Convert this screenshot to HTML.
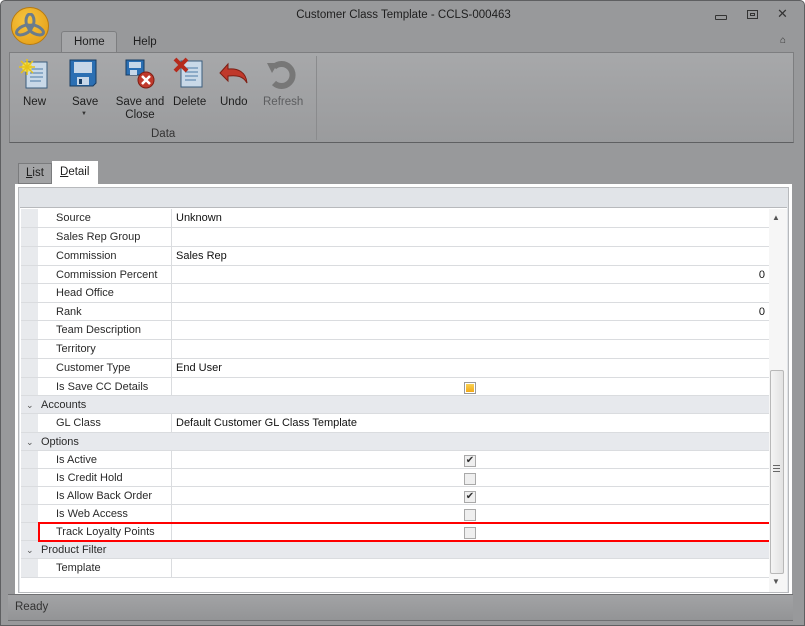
<!DOCTYPE html>
<html><head><meta charset="utf-8">
<style>
*{margin:0;padding:0;box-sizing:border-box}
body{width:805px;height:626px;overflow:hidden;background:#fff;font-family:"Liberation Sans","DejaVu Sans",sans-serif;font-size:11px;color:#222;position:relative}
.win{position:absolute;left:0;top:0;width:805px;height:626px;background:#98999b;border:1px solid #5e5f61;border-radius:5px 5px 0 0}
.abs{position:absolute}
.title{left:0;top:8px;width:805px;text-align:center;font-size:11.5px;color:#1e1e1e}
.tab{font-size:11.5px;color:#1e1e1e}
.ribbon{left:8px;top:51px;width:785px;height:91px;background:linear-gradient(#a7a8aa,#9a9b9d);border:1px solid #7d7e80;border-bottom:1px solid #5f6062}
.btnlbl{font-size:11.5px;color:#1e1e1e;text-align:center;line-height:13px;white-space:nowrap}
.grid{left:20px;top:208px;width:748px;height:383px;background:#fff}
.row{position:absolute;left:0;width:748px;height:19px;border-bottom:1px solid #dadcdf}
.ind{position:absolute;left:0;top:0;width:17px;height:100%;background:#e8eaed}
.lab{position:absolute;left:35px;top:3px;font-size:11px;color:#2a2a2a}
.val{position:absolute;left:150px;top:0;height:100%;border-left:1px solid #dadcdf;width:598px;padding:3px 4px;font-size:11px;color:#111}
.cat{background:#e7e9ed}
.cat .lab{left:20px}
.cat .chev{position:absolute;left:5px;top:4px;font-size:9px;color:#555}
.cb{position:absolute;left:443px;top:4px;width:12px;height:12px;border:1px solid #a9a9a9;background:#efefef}
</style></head><body>
<div class="win">
 <div class="abs" style="left:10px;top:6px;width:38px;height:38px;border-radius:50%;background:radial-gradient(circle at 40% 35%,#f7c540,#e39a12);border:1px solid #b77a10"></div>
 <svg class="abs" style="left:13px;top:12px" width="32" height="26" viewBox="0 0 32 26"><g fill="none" stroke="#6b7c8c" stroke-width="3"><ellipse cx="16" cy="8" rx="4" ry="7"/><ellipse cx="10" cy="17" rx="8" ry="4" transform="rotate(-25 10 17)"/><ellipse cx="22" cy="17" rx="8" ry="4" transform="rotate(25 22 17)"/></g></svg>
 <div class="abs title">Customer Class Template - CCLS-000463</div>
 <div class="abs" style="left:714px;top:14px;width:12px;height:5px;border:1px solid #333;border-radius:1px"></div>
 <div class="abs" style="left:746px;top:9px;width:11px;height:9px;border:1px solid #333"><div style="margin:2px 2px;width:5px;height:3px;border:1px solid #333"></div></div>
 <div class="abs" style="left:776px;top:5px;font-size:13px;color:#333">✕</div>
 <div class="abs" style="left:779px;top:34px;font-size:10px;color:#333">⌂</div>
 <div class="abs" style="left:60px;top:30px;width:56px;height:23px;background:#a5a6a8;border:1px solid #7d7e80;border-bottom:none;border-radius:3px 3px 0 0"></div>
 <div class="abs tab" style="left:73px;top:35px">Home</div>
 <div class="abs tab" style="left:132px;top:35px">Help</div>
 <div class="abs ribbon"></div>
 <div class="abs" style="left:315px;top:55px;width:1px;height:84px;background:#8a8b8d"></div>
 <svg class="abs" style="left:18px;top:58px" width="32" height="32"><rect x="7" y="3" width="21" height="26" fill="#c9d9e8" stroke="#3b5d7d"/><g stroke="#4d7ca6"><line x1="11" y1="10" x2="24" y2="10"/><line x1="11" y1="14" x2="24" y2="14"/><line x1="11" y1="18" x2="24" y2="18"/><line x1="11" y1="22" x2="22" y2="22"/></g><circle cx="8" cy="8" r="5" fill="#f2e04a"/><g stroke="#e6c21a" stroke-width="1.5"><line x1="8" y1="0" x2="8" y2="16"/><line x1="0" y1="8" x2="16" y2="8"/><line x1="2" y1="2" x2="14" y2="14"/><line x1="14" y1="2" x2="2" y2="14"/></g></svg>
 <svg class="abs" style="left:68px;top:58px" width="28" height="28"><path d="M1 1H27V24L24 27H1Z" fill="#2b6fb3" stroke="#173c63"/><rect x="5" y="3" width="18" height="11" fill="#c7d7e8"/><rect x="8" y="18" width="12" height="8" fill="#c7d7e8"/><rect x="10" y="20" width="3" height="5" fill="#173c63"/></svg>
 <div class="abs" style="left:80px;top:110px;font-size:6px;color:#333">▼</div>
 <svg class="abs" style="left:124px;top:58px" width="32" height="32"><path d="M1 1H19V16H1Z" fill="#2b6fb3" stroke="#173c63"/><rect x="4" y="3" width="12" height="6" fill="#c7d7e8"/><rect x="5" y="11" width="7" height="5" fill="#c7d7e8"/><circle cx="21" cy="21" r="8" fill="#c0392b" stroke="#7d1f14"/><path d="M17 17L25 25M25 17L17 25" stroke="#fff" stroke-width="2.5"/></svg>
 <svg class="abs" style="left:172px;top:56px" width="32" height="32"><rect x="8" y="4" width="21" height="26" fill="#c9d9e8" stroke="#3b5d7d"/><g stroke="#4d7ca6"><line x1="12" y1="11" x2="25" y2="11"/><line x1="12" y1="15" x2="25" y2="15"/><line x1="12" y1="19" x2="25" y2="19"/><line x1="12" y1="23" x2="23" y2="23"/></g><path d="M2 2L14 14M14 2L2 14" stroke="#b52a1c" stroke-width="4"/></svg>
 <svg class="abs" style="left:217px;top:60px" width="32" height="28"><path d="M2 12L10 3V8C20 7 28 11 29 22C25 15 19 14 10 15V20Z" fill="#c0392b" stroke="#7d1f14"/></svg>
 <svg class="abs" style="left:265px;top:58px" width="32" height="30"><path d="M8 24A11 11 0 1 0 8 8" fill="none" stroke="#777" stroke-width="6"/><path d="M1 4L12 4L6 14Z" fill="#777"/></svg>
 <div class="abs btnlbl" style="left:22px;top:95px">New</div>
 <div class="abs btnlbl" style="left:71px;top:95px">Save</div>
 <div class="abs btnlbl" style="left:109px;top:95px;width:60px">Save and<br>Close</div>
 <div class="abs btnlbl" style="left:172px;top:95px">Delete</div>
 <div class="abs btnlbl" style="left:219px;top:95px">Undo</div>
 <div class="abs btnlbl" style="left:262px;top:95px;color:#5c5d5f">Refresh</div>
 <div class="abs btnlbl" style="left:150px;top:127px;color:#333">Data</div>
 <div class="abs" style="left:17px;top:162px;width:34px;height:21px;background:#a2a3a5;border:1px solid #7a7b7d"></div>
 <div class="abs tab" style="left:25px;top:166px"><u>L</u>ist</div>
 <div class="abs" style="left:51px;top:160px;width:46px;height:24px;background:#fff"></div>
 <div class="abs tab" style="left:59px;top:165px"><u>D</u>etail</div>
 <div class="abs" style="left:14px;top:183px;width:777px;height:411px;background:#fff"></div>
 <div class="abs" style="left:17px;top:186px;width:771px;height:406px;border:1px solid #b7b9bc;background:#e1e4e8"></div>
 <div class="abs" style="left:19px;top:206px;width:767px;height:385px;border-top:1px solid #b7b9bc;background:#fff"></div>
 <div class="abs grid">
  <div class="row" style="top:0"><div class="ind"></div><div class="lab">Source</div><div class="val">Unknown</div></div>
  <div class="row" style="top:19px"><div class="ind"></div><div class="lab">Sales Rep Group</div><div class="val"></div></div>
  <div class="row" style="top:38px"><div class="ind"></div><div class="lab">Commission</div><div class="val">Sales Rep</div></div>
  <div class="row" style="top:57px;height:18px"><div class="ind"></div><div class="lab">Commission Percent</div><div class="val" style="text-align:right">0</div></div>
  <div class="row" style="top:75px"><div class="ind"></div><div class="lab">Head Office</div><div class="val"></div></div>
  <div class="row" style="top:94px;height:18px"><div class="ind"></div><div class="lab">Rank</div><div class="val" style="text-align:right">0</div></div>
  <div class="row" style="top:112px"><div class="ind"></div><div class="lab">Team Description</div><div class="val"></div></div>
  <div class="row" style="top:131px"><div class="ind"></div><div class="lab">Territory</div><div class="val"></div></div>
  <div class="row" style="top:150px"><div class="ind"></div><div class="lab">Customer Type</div><div class="val">End User</div></div>
  <div class="row" style="top:169px;height:18px"><div class="ind"></div><div class="lab">Is Save CC Details</div><div class="val"></div><div class="cb" style="background:linear-gradient(#fbd75a,#f0a512);border-color:#999;box-shadow:inset 0 0 0 1px #fff"></div></div>
  <div class="row cat" style="top:187px;height:18px"><div class="chev">⌄</div><div class="lab">Accounts</div></div>
  <div class="row" style="top:205px"><div class="ind"></div><div class="lab">GL Class</div><div class="val">Default Customer GL Class Template</div></div>
  <div class="row cat" style="top:224px;height:18px"><div class="chev">⌄</div><div class="lab">Options</div></div>
  <div class="row" style="top:242px;height:18px"><div class="ind"></div><div class="lab">Is Active</div><div class="val"></div><div class="cb" style="font-size:10px;line-height:10px;text-align:center;color:#333">✔</div></div>
  <div class="row" style="top:260px;height:18px"><div class="ind"></div><div class="lab">Is Credit Hold</div><div class="val"></div><div class="cb"></div></div>
  <div class="row" style="top:278px;height:18px"><div class="ind"></div><div class="lab">Is Allow Back Order</div><div class="val"></div><div class="cb" style="font-size:10px;line-height:10px;text-align:center;color:#333">✔</div></div>
  <div class="row" style="top:296px;height:18px"><div class="ind"></div><div class="lab">Is Web Access</div><div class="val"></div><div class="cb"></div></div>
  <div class="row" style="top:314px;height:18px"><div class="ind"></div><div class="lab">Track Loyalty Points</div><div class="val"></div><div class="cb"></div></div>
  <div class="row cat" style="top:332px;height:18px"><div class="chev">⌄</div><div class="lab">Product Filter</div></div>
  <div class="row" style="top:350px"><div class="ind"></div><div class="lab">Template</div><div class="val"></div></div>
 </div>
 <div class="abs" style="left:37px;top:521px;width:733px;height:20px;border:2px solid #f00"></div>
 <div class="abs" style="left:768px;top:208px;width:18px;height:383px;background:#f6f6f6"></div>
 <div class="abs" style="left:771px;top:212px;font-size:8px;color:#555">▲</div>
 <div class="abs" style="left:769px;top:369px;width:14px;height:204px;border:1px solid #b8b8b8;border-radius:2px;background:linear-gradient(90deg,#f4f4f4,#e2e2e2)"></div>
 <div class="abs" style="left:772px;top:464px;width:7px;height:7px;border-top:1px solid #666;border-bottom:1px solid #666"><div style="margin-top:2px;border-top:1px solid #666"></div></div>
 <div class="abs" style="left:771px;top:576px;font-size:8px;color:#555">▼</div>
 <div class="abs" style="left:7px;top:593px;width:785px;height:27px;background:linear-gradient(#a2a3a5,#939496);border-top:1px solid #6f7072;border-bottom:1px solid #6f7072"></div>
 <div class="abs" style="left:14px;top:600px;font-size:11.5px;color:#333">Ready</div>
</div>
</body></html>
